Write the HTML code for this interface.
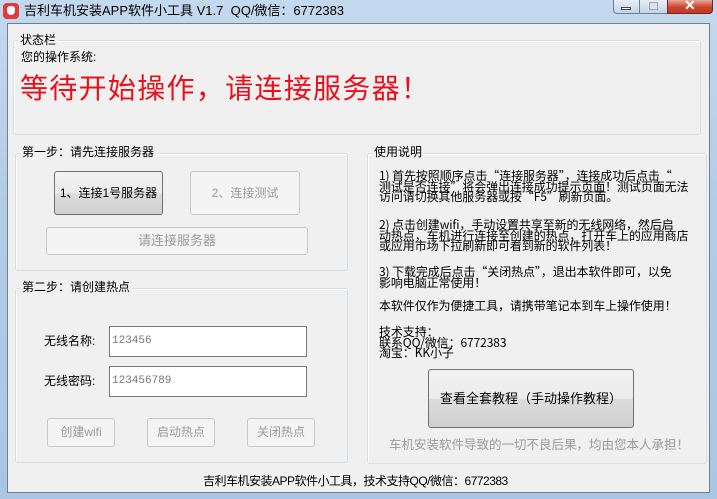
<!DOCTYPE html>
<html><head><meta charset="utf-8"><style>
*{margin:0;padding:0;box-sizing:border-box}
body{width:717px;height:499px;overflow:hidden;position:relative;background:linear-gradient(180deg,#c4d9ee 0%,#b3cce6 40%,#aac6e4 100%);font-family:"Liberation Sans","Noto Sans CJK SC",sans-serif;font-size:12px;color:#000}
.a{position:absolute;white-space:nowrap}
.client{position:absolute;left:7px;top:23px;width:703px;height:470px;background:#f0f0f0;border:1px solid #6d7f95}
.grp{position:absolute;border:1px solid #d5dfe5;border-radius:3px;box-shadow:inset 1px 1px 0 #fff}
.gt{position:absolute;background:#f0f0f0;padding:0 2px;font-size:12px;line-height:14px}
.btn{position:absolute;border:1px solid #adadad;border-radius:3px;background:linear-gradient(#f2f2f2,#ebebeb 50%,#dddddd 51%,#cfcfcf);text-align:center;font-size:12px}
.dis{border-color:#c8c8c8;background:#f4f4f4;color:#9a9a9a}
.inp{position:absolute;background:#fff;border:1px solid #7a7a7a;font-size:11px;color:#777;padding-left:2px;font-family:"Liberation Mono","Noto Sans CJK SC",monospace}
.p{position:absolute;left:379px;font-family:"Noto Sans CJK SC",sans-serif;font-size:12px;line-height:10.6px;white-space:nowrap;letter-spacing:-0.1px}
</style></head><body>
<div class="a" style="left:3px;top:3px;width:16px;height:16px;background:#e23a3a;border-radius:4px"></div>
<div class="a" style="left:7px;top:6px;width:8px;height:9px;background:#fff;border-radius:3px 3px 4px 4px"></div>
<div class="a" style="left:24px;top:2px;font-size:13px;line-height:17px">吉利车机安装APP软件小工具 V1.7&nbsp; QQ/微信：6772383</div>
<div class="a" style="left:613px;top:0;width:27px;height:14px;border:1px solid #6f7e91;border-top:none;border-radius:0 0 0 4px;background:linear-gradient(#e7eef7,#c3d3e6)"></div>
<div class="a" style="left:621px;top:7px;width:10px;height:3px;background:#fff;border:1px solid #445"></div>
<div class="a" style="left:640px;top:0;width:27px;height:14px;border-bottom:1px solid #6f7e91;background:linear-gradient(#e7eef7,#c3d3e6)"></div>
<div class="a" style="left:649px;top:2px;width:9px;height:8px;border:1px solid #9aa;background:#dde"></div>
<div class="a" style="left:667px;top:0;width:46px;height:14px;border:1px solid #6f2a20;border-top:none;border-radius:0 0 4px 0;background:linear-gradient(#e8a597,#c9452f 55%,#c23b22)"></div>
<div class="a" style="left:684px;top:-3px;color:#fff;font-size:14px;font-weight:bold">✕</div>

<div class="client"></div>
<div class="grp" style="left:13px;top:40px;width:688px;height:95px"></div>
<div class="gt" style="left:18px;top:33px">状态栏</div>
<div class="a" style="left:21px;top:50px;line-height:14px">您的操作系统:</div>
<div class="a" style="left:20px;top:71px;font-size:28px;line-height:36px;color:#e8101a;letter-spacing:1.3px">等待开始操作，请连接服务器！</div>

<div class="grp" style="left:15px;top:153px;width:333px;height:118px"></div>
<div class="gt" style="left:20px;top:145px">第一步：请先连接服务器</div>
<div class="btn" style="left:54px;top:171px;width:109px;height:44px;line-height:42px;border-color:#707070">1、连接1号服务器</div>
<div class="btn dis" style="left:190px;top:171px;width:110px;height:44px;line-height:42px">2、连接测试</div>
<div class="btn dis" style="left:46px;top:227px;width:262px;height:28px;line-height:26px;font-size:13px">请连接服务器</div>

<div class="grp" style="left:15px;top:288px;width:333px;height:175px"></div>
<div class="gt" style="left:20px;top:280px">第二步：请创建热点</div>
<div class="a" style="left:44px;top:334px;line-height:14px">无线名称:</div>
<div class="inp" style="left:109px;top:326px;width:198px;height:31px;line-height:29px">123456</div>
<div class="a" style="left:44px;top:374px;line-height:14px">无线密码:</div>
<div class="inp" style="left:109px;top:366px;width:198px;height:31px;line-height:29px">123456789</div>
<div class="btn dis" style="left:47px;top:418px;width:68px;height:29px;line-height:27px">创建wifi</div>
<div class="btn dis" style="left:147px;top:418px;width:68px;height:29px;line-height:27px">启动热点</div>
<div class="btn dis" style="left:247px;top:418px;width:68px;height:29px;line-height:27px">关闭热点</div>

<div class="grp" style="left:367px;top:153px;width:340px;height:311px"></div>
<div class="gt" style="left:372px;top:145px">使用说明</div>
<div class="p" style="top:171px">1) 首先按照顺序点击“连接服务器”，连接成功后点击“<br>测试是否连接”将会弹出连接成功提示页面！测试页面无法<br>访问请切换其他服务器或按“F5”刷新页面。</div>
<div class="p" style="top:220px">2) 点击创建wifi，手动设置共享至新的无线网络，然后启<br>动热点，车机进行连接至创建的热点，打开车上的应用商店<br>或应用市场下拉刷新即可看到新的软件列表！</div>
<div class="p" style="top:267px">3) 下载完成后点击“关闭热点”，退出本软件即可，以免<br>影响电脑正常使用！</div>
<div class="p" style="top:301px">本软件仅作为便捷工具，请携带笔记本到车上操作使用！</div>
<div class="p" style="top:327px">技术支持：<br>联系QQ/微信：6772383<br>淘宝：KK小子</div>
<div class="btn" style="left:428px;top:369px;width:206px;height:59px;line-height:57px;font-size:13px;border-color:#707070">查看全套教程（手动操作教程）</div>
<div class="a" style="left:389px;top:438px;color:#9a9a9a;font-size:12.5px;line-height:14px">车机安装软件导致的一切不良后果，均由您本人承担！</div>

<div class="a" style="left:203px;top:474px;line-height:14px;letter-spacing:-0.5px">吉利车机安装APP软件小工具，技术支持QQ/微信：6772383</div>
</body></html>
